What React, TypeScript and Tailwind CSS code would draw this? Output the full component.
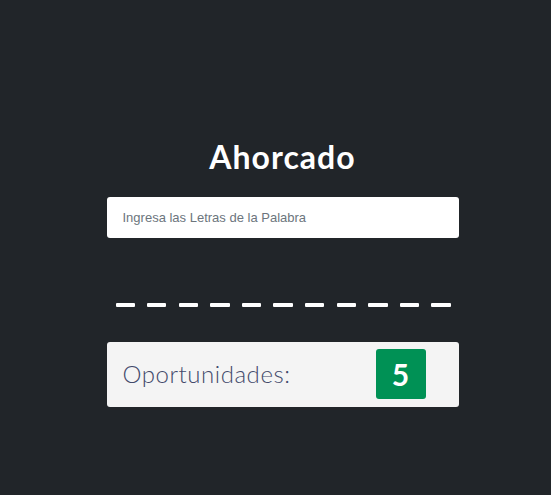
import React, { useState } from "react";

const App = () => {
  const [letra, setLetra] = useState("");
  const palabra = Array.from({ length: 11 });

  return (
    <div className="min-h-[495px] bg-[#212529] flex flex-col items-center pt-[137px] pl-[14px] font-['Lato',sans-serif]">
      <h1 className="text-white text-[32px] font-bold leading-[40px] tracking-[1px]">
        Ahorcado
      </h1>
      <div className="w-[352px] mt-[20px]">
        <input
          value={letra}
          onChange={(e) => setLetra(e.target.value)}
          type="text"
          placeholder="Ingresa las Letras de la Palabra"
          className="w-full h-[41px] bg-white rounded-[3px] px-[16px] text-[13px] font-['Liberation_Sans',sans-serif] text-[#495057] placeholder:text-[#6c757d] outline-none"
        />
      </div>
      <div className="w-[352px] flex gap-[12.2px] pl-[9px] mt-[65px]">
        {palabra.map((_, idx) => (
          <span key={idx} className="block w-[19.4px] h-[3.5px] bg-white rounded-[1px]" />
        ))}
      </div>
      <div className="w-[352px] h-[65px] mt-[35px] bg-[#f4f4f4] rounded-[3px] flex items-center pl-[16px] pr-[33px] justify-between">
        <span className="text-[24px] font-light text-[#434a6b] tracking-[0.55px]">
          Oportunidades:
        </span>
        <div className="w-[50px] h-[50px] bg-[#009155] rounded-[3px] flex items-center justify-center text-white text-[30px] font-bold">
          5
        </div>
      </div>
    </div>
  );
};

export default App;
